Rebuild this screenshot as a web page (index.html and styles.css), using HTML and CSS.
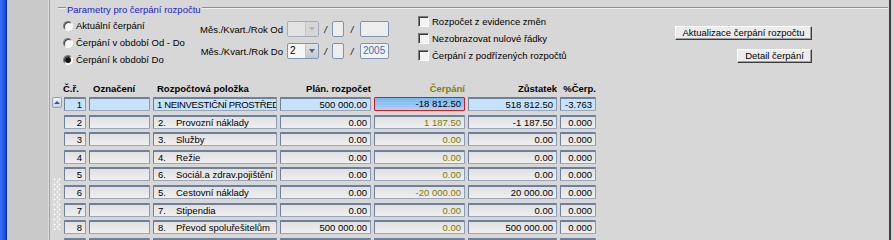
FILE: index.html
```html
<!DOCTYPE html>
<html lang="cs">
<head>
<meta charset="utf-8">
<title>Čerpání rozpočtu</title>
<link rel="stylesheet" href="styles.css">
</head>
<body>
<div class="window">
  <div class="edge"></div>
  <div class="side"></div>
  <div class="main">
    <div class="group">
      <div class="legend"><span class="legend-text">Parametry pro čerpání rozpočtu</span></div>
      <div class="params">
        <div class="radios">
          <div class="opt"><span class="radio"></span><span>Aktuální čerpání</span></div>
          <div class="opt"><span class="radio"></span><span>Čerpání v období Od - Do</span></div>
          <div class="opt"><span class="radio on"></span><span>Čerpání k období Do</span></div>
        </div>
        <div class="measure">
          <div class="mrow">
            <span class="mlabel">Měs./Kvart./Rok Od</span>
            <span class="combo disabled"><span class="cval"></span><span class="carrow"></span></span>
            <span class="slash">/</span>
            <span class="box"></span>
            <span class="slash wide">/</span>
            <span class="box year"></span>
          </div>
          <div class="mrow">
            <span class="mlabel">Měs./Kvart./Rok Do</span>
            <span class="combo"><span class="cval">2</span><span class="carrow"></span></span>
            <span class="slash">/</span>
            <span class="box"></span>
            <span class="slash wide">/</span>
            <span class="box year filled">2005</span>
          </div>
        </div>
        <div class="checks">
          <div class="opt"><span class="check"></span><span>Rozpočet z evidence změn</span></div>
          <div class="opt"><span class="check"></span><span>Nezobrazovat nulové řádky</span></div>
          <div class="opt"><span class="check"></span><span>Čerpání z podřízených rozpočtů</span></div>
        </div>
        <div class="buttons">
          <div class="btn btn-wide">Aktualizace čerpání rozpočtu</div>
          <div class="btn btn-narrow">Detail čerpání</div>
        </div>
      </div>
    </div>

    <div class="table">
      <div class="scroll">
        <div class="up"></div>
        <div class="dots"></div>
      </div>
      <div class="gridwrap">
        <div class="thead">
          <div class="h h-cr">Č.ř.</div>
          <div class="h h-txt">Označení</div>
          <div class="h h-txt">Rozpočtová položka</div>
          <div class="h h-num">Plán. rozpočet</div>
          <div class="h h-num olive">Čerpání</div>
          <div class="h h-num">Zůstatek</div>
          <div class="h h-num">%Čerp.</div>
        </div>
        <div class="rows">
          <div class="cell num sel">1</div>
          <div class="cell sel"></div>
          <div class="cell sel tight">1 NEINVESTIČNÍ PROSTŘEDK</div>
          <div class="cell num sel">500 000.00</div>
          <div class="cell num active">-18 812.50</div>
          <div class="cell num sel">518 812.50</div>
          <div class="cell num sel">-3.763</div>

          <div class="cell num">2</div>
          <div class="cell"></div>
          <div class="cell"><span class="no">2.</span>Provozní náklady</div>
          <div class="cell num">0.00</div>
          <div class="cell num olive">1 187.50</div>
          <div class="cell num">-1 187.50</div>
          <div class="cell num">0.000</div>

          <div class="cell num">3</div>
          <div class="cell"></div>
          <div class="cell"><span class="no">3.</span>Služby</div>
          <div class="cell num">0.00</div>
          <div class="cell num olive">0.00</div>
          <div class="cell num">0.00</div>
          <div class="cell num">0.000</div>

          <div class="cell num">4</div>
          <div class="cell"></div>
          <div class="cell"><span class="no">4.</span>Režie</div>
          <div class="cell num">0.00</div>
          <div class="cell num olive">0.00</div>
          <div class="cell num">0.00</div>
          <div class="cell num">0.000</div>

          <div class="cell num">5</div>
          <div class="cell"></div>
          <div class="cell"><span class="no">6.</span>Sociál.a zdrav.pojištění</div>
          <div class="cell num">0.00</div>
          <div class="cell num olive">0.00</div>
          <div class="cell num">0.00</div>
          <div class="cell num">0.000</div>

          <div class="cell num">6</div>
          <div class="cell"></div>
          <div class="cell"><span class="no">5.</span>Cestovní náklady</div>
          <div class="cell num">0.00</div>
          <div class="cell num olive">-20 000.00</div>
          <div class="cell num">20 000.00</div>
          <div class="cell num">0.000</div>

          <div class="cell num">7</div>
          <div class="cell"></div>
          <div class="cell"><span class="no">7.</span>Stipendia</div>
          <div class="cell num">0.00</div>
          <div class="cell num olive">0.00</div>
          <div class="cell num">0.00</div>
          <div class="cell num">0.000</div>

          <div class="cell num">8</div>
          <div class="cell"></div>
          <div class="cell"><span class="no">8.</span>Převod spoluřešitelům</div>
          <div class="cell num">500 000.00</div>
          <div class="cell num olive">0.00</div>
          <div class="cell num">500 000.00</div>
          <div class="cell num">0.000</div>

          <div class="cell"></div>
          <div class="cell"></div>
          <div class="cell"></div>
          <div class="cell"></div>
          <div class="cell"></div>
          <div class="cell"></div>
          <div class="cell"></div>
        </div>
      </div>
    </div>
  </div>
  <div class="rim"></div>
</div>
</body>
</html>
```
FILE: styles.css
```css
* { box-sizing: border-box; }
html, body { margin: 0; padding: 0; }
body {
  width: 894px;
  height: 240px;
  overflow: hidden;
  font-family: "Liberation Sans", Arial, sans-serif;
  font-size: 9.5px;
  color: #000;
  background: #d7d7d7;
}
.window { display: flex; height: 240px; }
.edge {
  width: 7px;
  background: linear-gradient(to right, #3d6ef5 0, #2558ee 4px, #0c39cc 6px, #0a2a9a 7px);
}
.side {
  width: 43px;
  background: #c9c9c9;
  border-right: 1px solid #a0a0a0;
  box-shadow: inset -1px 0 0 #dcdcdc;
}
.main {
  flex: 1;
  background: #d7d7d7;
  border-right: 2px solid #3e3e3e;
  padding: 3px 0 0 2px;
  display: flex;
  flex-direction: column;
  overflow: hidden;
}
.rim { width: 3px; background: #d2d2d2; }

/* group */
.group { margin-left: 6px; }
.legend { display: flex; height: 13px; line-height: 13px; }
.legend::before, .legend::after {
  content: "";
  height: 0;
  margin-top: 4px;
  border-top: 1px solid #8e8e8e;
  border-bottom: 1px solid #efefef;
}
.legend::before { width: 8px; }
.legend::after { flex: 1; margin-right: 1px; }
.legend-text { color: #1a1ad0; padding: 0 1px; }

.params { display: flex; margin-top: -3px; padding-right: 77px; }
.radios { width: 137px; padding: 4px 0 0 5px; display: flex; flex-direction: column; }
.opt { height: 17px; display: flex; align-items: center; gap: 3px; white-space: nowrap; }
.radio {
  width: 10px; height: 10px; border-radius: 50%;
  background: #f7f7f7;
  border: 1px solid;
  border-color: #7a7a7a #ffffff #ffffff #7a7a7a;
  box-shadow: inset 1px 1px 0 #3c3c3c;
}
.radio.on { background: radial-gradient(circle, #151515 0 2.4px, #5a5a5a 2.9px, #f0f0f0 3.4px); }

.measure { padding-top: 8px; display: flex; flex-direction: column; gap: 6px; }
.mrow { display: flex; height: 16px; align-items: center; }
.mlabel { width: 92px; text-align: right; padding-right: 4px; white-space: nowrap; }
.combo {
  width: 32px; height: 16px; display: flex;
  border: 1px solid #7f93b2; border-radius: 2px;
  background: #f6f6f6;
}
.cval { flex: 1; padding-left: 2px; line-height: 14px; font-size: 10px; }
.carrow {
  width: 13px; background: linear-gradient(#e2e2e2, #c8c8c8);
  border-left: 1px solid #c0c6d0;
  display: flex; align-items: center; justify-content: center;
}
.carrow::after {
  content: ""; width: 0; height: 0;
  border-left: 3.5px solid transparent; border-right: 3.5px solid transparent;
  border-top: 4px solid #4e6488;
}
.combo.disabled { background: #e3e3e3; border-color: #a4acba; }
.combo.disabled .carrow { background: #d6d6d6; }
.combo.disabled .carrow::after { border-top-color: #b4b4b4; }
.slash { width: 13px; text-align: center; font-style: italic; }
.slash.wide { width: 16px; }
.box {
  width: 12px; height: 16px;
  border: 1px solid #7f93b2; border-radius: 2px;
  background: #eeeeee;
}
.box.year { width: 29px; }
.box.filled { color: #4a6ea8; font-size: 10px; line-height: 14px; padding-left: 2px; background: #f2f2f2; }

.checks { margin-left: 29px; display: flex; flex-direction: column; }
.check {
  width: 11px; height: 11px;
  background: #f2f2f2;
  border: 1px solid;
  border-color: #7a7a7a #ffffff #ffffff #7a7a7a;
  box-shadow: inset 1px 1px 0 #3c3c3c;
}

.buttons { margin-left: auto; padding-top: 13px; display: flex; flex-direction: column; align-items: flex-end; gap: 9px; }
.btn {
  height: 14px; line-height: 12px; text-align: center; white-space: nowrap;
  background: #ececec;
  border: 1px solid;
  border-color: #ffffff #3c3c3c #3c3c3c #ffffff;
  box-shadow: inset -1px -1px 0 #a0a0a0;
}
.btn-wide { width: 137px; }
.btn-narrow { width: 75px; }

/* table */
.table { display: flex; margin-top: 13px; }
.scroll { width: 10px; margin-right: 2px; padding-top: 16px; display: flex; flex-direction: column; }
.up {
  width: 10px; height: 11px;
  border: 1px solid #8ea2c0; border-radius: 2px;
  background: linear-gradient(#eef2f8, #c9d4e4);
  display: flex; align-items: center; justify-content: center;
}
.up::after {
  content: ""; width: 0; height: 0;
  border-left: 3px solid transparent; border-right: 3px solid transparent;
  border-bottom: 3px solid #3a5a8a;
}
.dots {
  margin-top: 70px; height: 52px; width: 8px; margin-left: 1px;
  background:
    radial-gradient(circle at 1.5px 1.5px, #ffffff 0.8px, transparent 1.2px) 0 0 / 5px 5px,
    radial-gradient(circle at 1.5px 1.5px, #ffffff 0.8px, transparent 1.2px) 3px 2.5px / 5px 5px;
}
.gridwrap { display: flex; flex-direction: column; }
.thead, .rows {
  display: grid;
  grid-template-columns: 22px 61px 124px 91px 91px 89px 36px;
  column-gap: 3px;
}
.thead { height: 15px; line-height: 15px; font-weight: bold; margin-bottom: 1px; white-space: nowrap; }
.h-cr { margin-left: -1px; }
.h-txt { padding-left: 4px; }
.h-num { text-align: right; }
.h.olive { color: #80800a; }

.rows { grid-auto-rows: 14px; row-gap: 3.6px; }
.cell {
  border: 1px solid #6f809d;
  border-top-width: 2px;
  border-right-color: #8d9bb2;
  border-bottom-color: #9aa6ba;
  border-radius: 1px;
  background: linear-gradient(#e1e1e1, #efefef);
  line-height: 11px;
  padding: 0 3px 0 4px;
  white-space: nowrap;
  overflow: hidden;
}
.cell.tight { letter-spacing: -0.35px; padding-left: 3px; padding-right: 0; }
.cell.num { text-align: right; padding: 0 3px 0 2px; }
.cell.sel { background: #c6e3fb; }
.cell.active {
  border: 1px solid #e01818;
  background: linear-gradient(#7db6ec, #a9d2f7);
  line-height: 12px;
}
.cell.olive { color: #7c7c00; }
.no { display: inline-block; width: 18px; }
```
